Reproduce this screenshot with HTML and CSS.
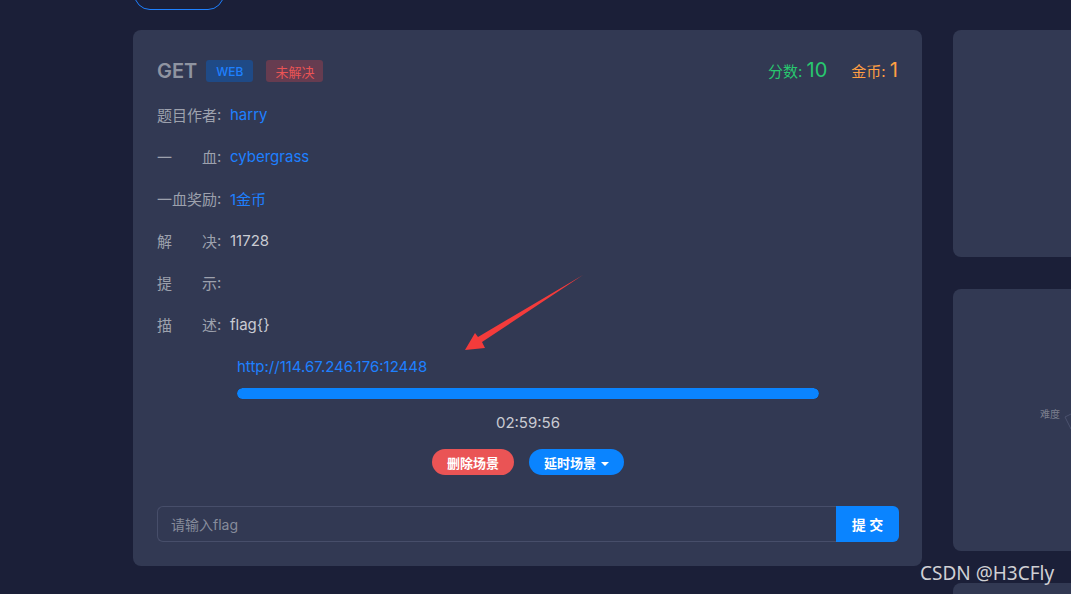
FILE: index.html
```html
<!DOCTYPE html>
<html lang="en">

<head>
    <meta charset="utf-8">
    <link rel="stylesheet" href="styles.css">
</head>

<body>

    <div id="page">
        <div id="toolbar">
            <button class="outline-btn"></button>
        </div>
        <div id="board">
            <div id="main-col">
                <div class="card" id="challenge-card">
                    <div id="card-head">
                        <div class="head-left">
                            <span class="title">GET</span>
                            <span class="badge badge-blue">WEB</span>
                            <span class="badge badge-red">未解决</span>
                        </div>
                        <div class="head-right">
                            <span class="score">分数: <b>10</b></span>
                            <span class="coin">金币: <b>1</b></span>
                        </div>
                    </div>
                    <div class="info-row"><span class="label">题目作者</span><span class="colon">:</span><span class="value link">harry</span></div>
                    <div class="info-row"><span class="label">一血</span><span class="colon">:</span><span class="value link">cybergrass</span></div>
                    <div class="info-row"><span class="label">一血奖励</span><span class="colon">:</span><span class="value link">1金币</span></div>
                    <div class="info-row"><span class="label">解决</span><span class="colon">:</span><span class="value">11728</span></div>
                    <div class="info-row"><span class="label">提示</span><span class="colon">:</span><span class="value"></span></div>
                    <div class="info-row"><span class="label">描述</span><span class="colon">:</span><span class="value">flag{}</span></div>

                    <div id="scene">
                        <div class="scene-url">http://114.67.246.176:12448</div>
                        <div class="progress"><div class="progress-fill" style="width: 100%"></div></div>
                        <div class="timer">02:59:56</div>
                        <div class="scene-btns">
                            <button class="pill pill-red">删除场景</button>
                            <button class="pill pill-blue">延时场景 <span class="caret"></span></button>
                        </div>
                    </div>

                    <div id="flag-form">
                        <input class="flag-input" type="text" placeholder="请输入flag">
                        <button class="submit-btn">提 交</button>
                    </div>

                    <svg class="annot-arrow" width="130" height="90" viewBox="0 0 130 90">
                        <polygon points="120,5 15,67 12,63 2,80 22,78 19,72" fill="#f43b3b" />
                    </svg>
                </div>
            </div>
            <div id="side-col">
                <div class="card side-card side-top"></div>
                <div class="card side-card side-mid">
                    <svg class="radar" width="131" height="262" viewBox="0 0 131 262">
                        <text x="87" y="129" class="radar-label">难度</text>
                        <path d="M118 125 L112 128 L118 140" class="radar-line" />
                    </svg>
                </div>
                <div class="card side-card side-low"></div>
            </div>
        </div>
        <div class="watermark">CSDN @H3CFly</div>
    </div>

</body>

</html>
```

FILE: styles.css
```css
body {
    margin: 0;
    background-color: #1b1f38;
    font-family: Inter, "Noto Sans CJK SC", sans-serif;
    overflow: hidden;
    height: 594px;
}

#page {
    padding-left: 133px;
}

#toolbar {
    margin-top: -22px;
    height: 32px;
}

.outline-btn {
    width: 90px;
    height: 32px;
    margin-left: 1px;
    border: 1px solid #1e80ff;
    border-radius: 16px;
    background-color: transparent;
}

#board {
    display: flex;
    gap: 31px;
    margin-top: 20px;
}

.card {
    background-color: #323953;
    border-radius: 8px;
}

#main-col {
    width: 789px;
    flex-shrink: 0;
}

#challenge-card {
    position: relative;
    padding: 30px 23px 24px 24px;
}

#card-head {
    display: flex;
    justify-content: space-between;
    align-items: center;
    height: 22px;
    margin-bottom: 11px;
}

.head-left {
    display: flex;
    align-items: center;
    gap: 13px;
}

.title {
    color: #8f94a1;
    font-size: 20px;
    font-weight: 600;
    margin-right: -4px;
}

.badge {
    display: inline-flex;
    align-items: center;
    height: 22px;
    padding: 0 9px;
    border-radius: 3px;
    font-size: 13px;
}

.badge-blue {
    background-color: #1f4a86;
    color: #1e80ff;
    font-size: 12px;
    font-weight: 500;
    padding: 0 10px;
}

.badge-red {
    background-color: #663c50;
    color: #ea5455;
}

.head-right {
    display: flex;
    align-items: baseline;
    gap: 24px;
    margin-top: -2px;
    margin-right: 1px;
}

.head-right b {
    font-weight: 400;
    font-size: 20px;
}

.score {
    color: #28c76f;
    font-size: 15px;
}

.coin {
    color: #ff9f43;
    font-size: 15px;
}

.info-row {
    display: flex;
    align-items: center;
    height: 42px;
    font-size: 15px;
    color: #9da1ad;
}

.label {
    display: inline-block;
    width: 60px;
    text-align: justify;
    text-align-last: justify;
}

.colon {
    width: 13px;
}

.value {
    color: #c9cbd2;
}

.value.link {
    color: #1e80ff;
}

#scene {
    width: 582px;
    margin: 1px auto 0;
}

.scene-url {
    height: 42px;
    line-height: 42px;
    font-size: 15px;
    color: #1e80ff;
}

.progress {
    height: 11px;
    border-radius: 6px;
    background-color: #283048;
    overflow: hidden;
}

.progress-fill {
    height: 100%;
    border-radius: 6px;
    background-color: #0a84ff;
}

.timer {
    margin-top: 14px;
    text-align: center;
    font-size: 15px;
    color: #c9cbd2;
}

.scene-btns {
    display: flex;
    justify-content: center;
    gap: 15px;
    margin-top: 17px;
}

.pill {
    height: 26px;
    padding: 0 15px;
    border: none;
    border-radius: 13px;
    color: #fff;
    font-family: inherit;
    font-size: 13px;
    font-weight: 700;
}

.pill-red {
    background-color: #ea5455;
}

.pill-blue {
    background-color: #0a84ff;
}

.caret {
    display: inline-block;
    width: 0;
    height: 0;
    margin-left: 2px;
    vertical-align: 2px;
    border-left: 4px solid transparent;
    border-right: 4px solid transparent;
    border-top: 4px solid #fff;
}

#flag-form {
    display: flex;
    margin-top: 31px;
    height: 36px;
}

.flag-input {
    flex: 1;
    box-sizing: border-box;
    height: 36px;
    padding: 0 13px;
    border: 1px solid #474e6a;
    border-right: none;
    border-radius: 6px 0 0 6px;
    background-color: transparent;
    color: #c9cbd2;
    font-family: inherit;
    font-size: 14px;
}

.flag-input::placeholder {
    color: #878c9b;
}

.submit-btn {
    width: 63px;
    height: 36px;
    border: none;
    border-radius: 0 6px 6px 0;
    background-color: #0a84ff;
    color: #fff;
    font-family: inherit;
    font-size: 14px;
    font-weight: 700;
}

.annot-arrow {
    position: absolute;
    left: 330px;
    top: 240px;
}

#side-col {
    display: flex;
    flex-direction: column;
    gap: 32px;
    width: 300px;
    flex-shrink: 0;
}

.side-top {
    height: 227px;
}

.side-mid {
    height: 262px;
}

.side-low {
    height: 60px;
}

.radar-label {
    font-size: 10px;
    fill: #7b7f8e;
}

.radar-line {
    fill: none;
    stroke: #4b526e;
    stroke-width: 1;
}

.watermark {
    position: absolute;
    left: 920px;
    top: 560px;
    font-family: "Noto Sans", sans-serif;
    font-size: 19px;
    color: #d0d0d4;
}
```
